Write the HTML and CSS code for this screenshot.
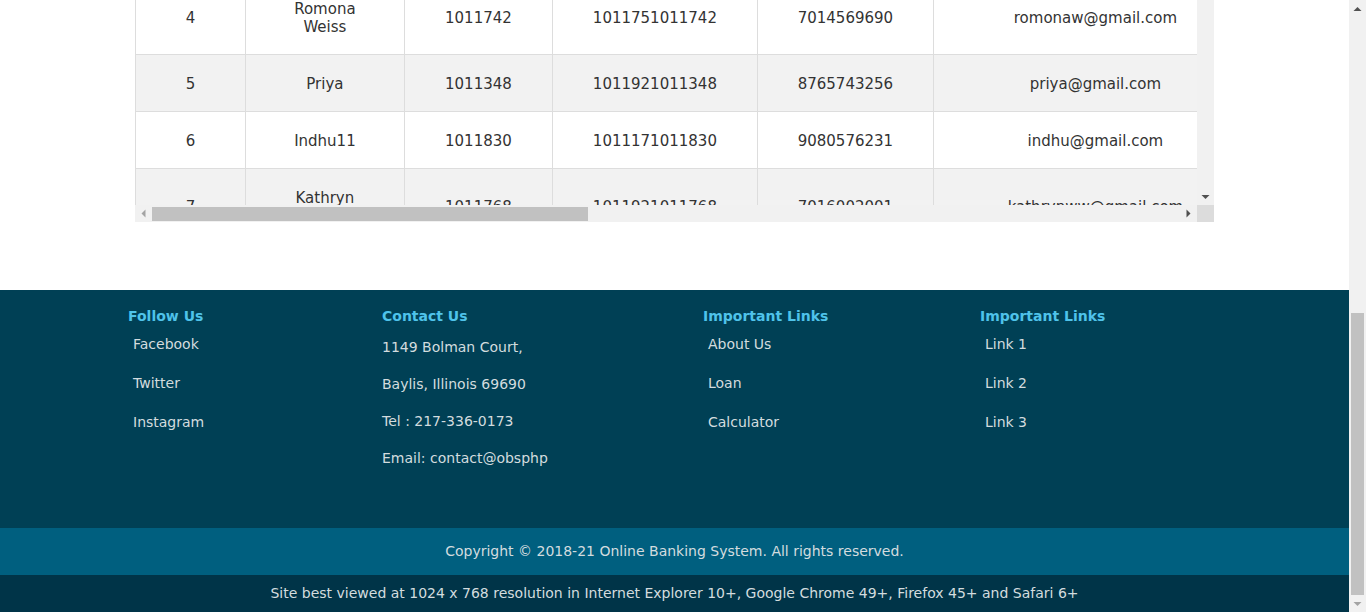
FILE: index.html
```html
<!DOCTYPE html>
<html lang="en">
<head>
<meta charset="utf-8">
<title>Customers - Online Banking System</title>
<link rel="stylesheet" href="styles.css">
</head>
<body>
<header class="site-header">
  <div class="brand">Online Banking System</div>
</header>
<nav class="site-nav">
  <a class="nav-link" href="#">Home</a>
  <a class="nav-link" href="#">About Us</a>
  <a class="nav-link" href="#">Loan</a>
  <a class="nav-link" href="#">Calculator</a>
</nav>
<main class="content">
  <h2 class="page-title">Customers</h2>
  <div class="table-box">
    <div class="table-view">
      <table class="data">
        <colgroup>
          <col class="c-no"><col class="c-name"><col class="c-id"><col class="c-acc"><col class="c-mob"><col class="c-mail">
        </colgroup>
        <thead>
          <tr><th>#</th><th>Name</th><th>Cust ID</th><th>Account No.</th><th>Mobile</th><th>Email</th></tr>
        </thead>
        <tbody>
          <tr><td>1</td><td>Arun</td><td>1011021</td><td>1011451011021</td><td>9876543210</td><td>arun@gmail.com</td></tr>
          <tr><td>2</td><td>Divya</td><td>1011356</td><td>1011631011356</td><td>9445123780</td><td>divya@gmail.com</td></tr>
          <tr><td>3</td><td>Sneha</td><td>1011512</td><td>1011871011512</td><td>9003456712</td><td>sneha@gmail.com</td></tr>
          <tr><td>4</td><td>Romona Weiss</td><td>1011742</td><td>1011751011742</td><td>7014569690</td><td>romonaw@gmail.com</td></tr>
          <tr><td>5</td><td>Priya</td><td>1011348</td><td>1011921011348</td><td>8765743256</td><td>priya@gmail.com</td></tr>
          <tr><td>6</td><td>Indhu11</td><td>1011830</td><td>1011171011830</td><td>9080576231</td><td>indhu@gmail.com</td></tr>
          <tr><td>7</td><td>Kathryn Wright</td><td>1011768</td><td>1011921011768</td><td>7016002001</td><td>kathrynww@gmail.com</td></tr>
        </tbody>
      </table>
    </div>
    <div class="vbar">
      <span class="sb-btn"><svg width="17" height="17" viewBox="0 0 17 17"><path d="M4.5 11H12.5L8.5 7Z" fill="#505050"/></svg></span>
      <div class="vtrack"><div class="vthumb"></div></div>
      <span class="sb-btn"><svg width="17" height="17" viewBox="0 0 17 17"><path d="M4.5 7H12.5L8.5 11Z" fill="#505050"/></svg></span>
    </div>
    <div class="hbar">
      <span class="sb-btn"><svg width="17" height="17" viewBox="0 0 17 17"><path d="M10.5 4.5V12.5L6.5 8.5Z" fill="#a3a3a3"/></svg></span>
      <div class="htrack"><div class="hthumb"></div></div>
      <span class="sb-btn"><svg width="17" height="17" viewBox="0 0 17 17"><path d="M6.5 4.5V12.5L10.5 8.5Z" fill="#505050"/></svg></span>
    </div>
    <div class="corner"></div>
  </div>
</main>
<footer class="site-footer">
  <div class="footer-cols">
    <div class="fcol">
      <h4 class="fhead">Follow Us</h4>
      <ul class="flinks">
        <li><a href="#">Facebook</a></li>
        <li><a href="#">Twitter</a></li>
        <li><a href="#">Instagram</a></li>
      </ul>
    </div>
    <div class="fcol">
      <h4 class="fhead">Contact Us</h4>
      <div class="contact-list">
        <p class="cline">1149 Bolman Court,</p>
        <p class="cline">Baylis, Illinois 69690</p>
        <p class="cline">Tel : 217-336-0173</p>
        <p class="cline">Email: contact@obsphp</p>
      </div>
    </div>
    <div class="fcol">
      <h4 class="fhead">Important Links</h4>
      <ul class="flinks">
        <li><a href="#">About Us</a></li>
        <li><a href="#">Loan</a></li>
        <li><a href="#">Calculator</a></li>
      </ul>
    </div>
    <div class="fcol">
      <h4 class="fhead">Important Links</h4>
      <ul class="flinks">
        <li><a href="#">Link 1</a></li>
        <li><a href="#">Link 2</a></li>
        <li><a href="#">Link 3</a></li>
      </ul>
    </div>
  </div>
  <div class="copyright">Copyright &copy; 2018-21 Online Banking System. All rights reserved.</div>
  <div class="bestview">Site best viewed at 1024 x 768 resolution in Internet Explorer 10+, Google Chrome 49+, Firefox 45+ and Safari 6+</div>
</footer>
<div class="page-scrollbar">
  <span class="sb-btn"><svg width="17" height="17" viewBox="0 0 17 17"><path d="M4.5 11H12.5L8.5 7Z" fill="#505050"/></svg></span>
  <div class="ptrack"><div class="pthumb"></div></div>
  <span class="sb-btn"><svg width="17" height="17" viewBox="0 0 17 17"><path d="M4.5 7H12.5L8.5 11Z" fill="#a3a3a3"/></svg></span>
</div>
<script src="script.js"></script>
</body>
</html>
```

FILE: styles.css
```css
html {
  margin: 0;
  padding: 0;
}
body {
  margin: 0 17px 0 0;
  padding: 0;
  font-family: "DejaVu Sans", Verdana, sans-serif;
  color: #333;
  background: #fff;
}

/* header (above the visible area) */
.site-header {
  height: 200px;
  box-sizing: border-box;
  background: #004055;
  display: flex;
  align-items: center;
  padding-left: 128px;
}
.brand {
  color: #4fc3ea;
  font-size: 28px;
  font-weight: bold;
}
.site-nav {
  height: 50px;
  background: #005f7f;
  display: flex;
  align-items: center;
  gap: 30px;
  padding-left: 128px;
}
.nav-link {
  color: #d3dcdf;
  text-decoration: none;
  font-size: 14px;
}

.content {
  padding-top: 60px;
  margin-bottom: 68px;
}
.page-title {
  margin: 0 0 43px;
  line-height: 40px;
  font-size: 26px;
  text-align: center;
  color: #004055;
}

/* table box with classic scrollbars */
.table-box {
  width: 80%;
  margin: 0 auto;
  display: grid;
  grid-template-columns: 1fr 17px;
  grid-template-rows: 454px 17px;
}
.table-view {
  overflow: hidden;
}
.sb-btn {
  flex: none;
  width: 17px;
  height: 17px;
  display: block;
}
.sb-btn svg {
  display: block;
}
.vbar {
  display: flex;
  flex-direction: column;
  background: #f1f1f1;
}
.vtrack {
  flex: 1;
  padding: 0 2px;
}
.vthumb {
  height: 200px;
  background: #c1c1c1;
}
.hbar {
  display: flex;
  background: #f1f1f1;
}
.htrack {
  flex: 1;
  padding: 2px 0 1px;
}
.hthumb {
  width: 436px;
  height: 100%;
  background: #c1c1c1;
}
.corner {
  background: #dcdcdc;
}

.data {
  width: 1122px;
  table-layout: fixed;
  border-collapse: collapse;
  font-size: 15px;
  line-height: 18px;
  color: #333;
}
.c-no { width: 110px; }
.c-name { width: 159px; }
.c-id { width: 148px; }
.c-acc { width: 205px; }
.c-mob { width: 176px; }
.c-mail { width: 324px; }

.data th,
.data td {
  border: 1px solid #ddd;
  padding: 20px 26px 18px;
  text-align: center;
  vertical-align: middle;
  font-weight: normal;
}
.data th {
  background: #005f7f;
  color: #fff;
  font-weight: bold;
}
.data tbody tr:nth-child(odd) td {
  background: #f2f2f2;
}
.data tbody tr:nth-child(even) td {
  background: #fff;
}

/* footer */
.site-footer {
  font-size: 14px;
}
.footer-cols {
  height: 238px;
  box-sizing: border-box;
  background: #004055;
  padding: 17px 0 0 128px;
  display: grid;
  grid-template-columns: 254px 321px 277px 1fr;
  align-items: start;
}
.fhead {
  margin: 0 0 10px;
  font-size: 14px;
  line-height: 18px;
  font-weight: bold;
  color: #4fc3ea;
}
.flinks {
  list-style: none;
  margin: 0;
  padding: 0 0 0 5px;
}
.flinks li {
  line-height: 18px;
  margin-bottom: 21px;
}
.flinks a {
  color: #d3dcdf;
  text-decoration: none;
}
.contact-list {
  padding-top: 3px;
}
.cline {
  margin: 0 0 19px;
  line-height: 18px;
  color: #d3dcdf;
}
.copyright {
  height: 47px;
  line-height: 47px;
  background: #005f7f;
  color: #d3dcdf;
  text-align: center;
}
.bestview {
  height: 37px;
  line-height: 37px;
  background: #003448;
  color: #d3dcdf;
  text-align: center;
}

/* window scrollbar (drawn over the right edge) */
.page-scrollbar {
  position: fixed;
  top: 0;
  right: 0;
  bottom: 0;
  width: 17px;
  display: flex;
  flex-direction: column;
  background: #f1f1f1;
}
.ptrack {
  flex: 1;
  display: flex;
  flex-direction: column;
  justify-content: flex-end;
  padding: 0 2px;
}
.pthumb {
  height: 282px;
  background: #c1c1c1;
}
```

FILE: script.js
```js
function scrollToBottom() {
  window.scrollTo(0, document.documentElement.scrollHeight);
}
scrollToBottom();
window.addEventListener('load', scrollToBottom);
```
